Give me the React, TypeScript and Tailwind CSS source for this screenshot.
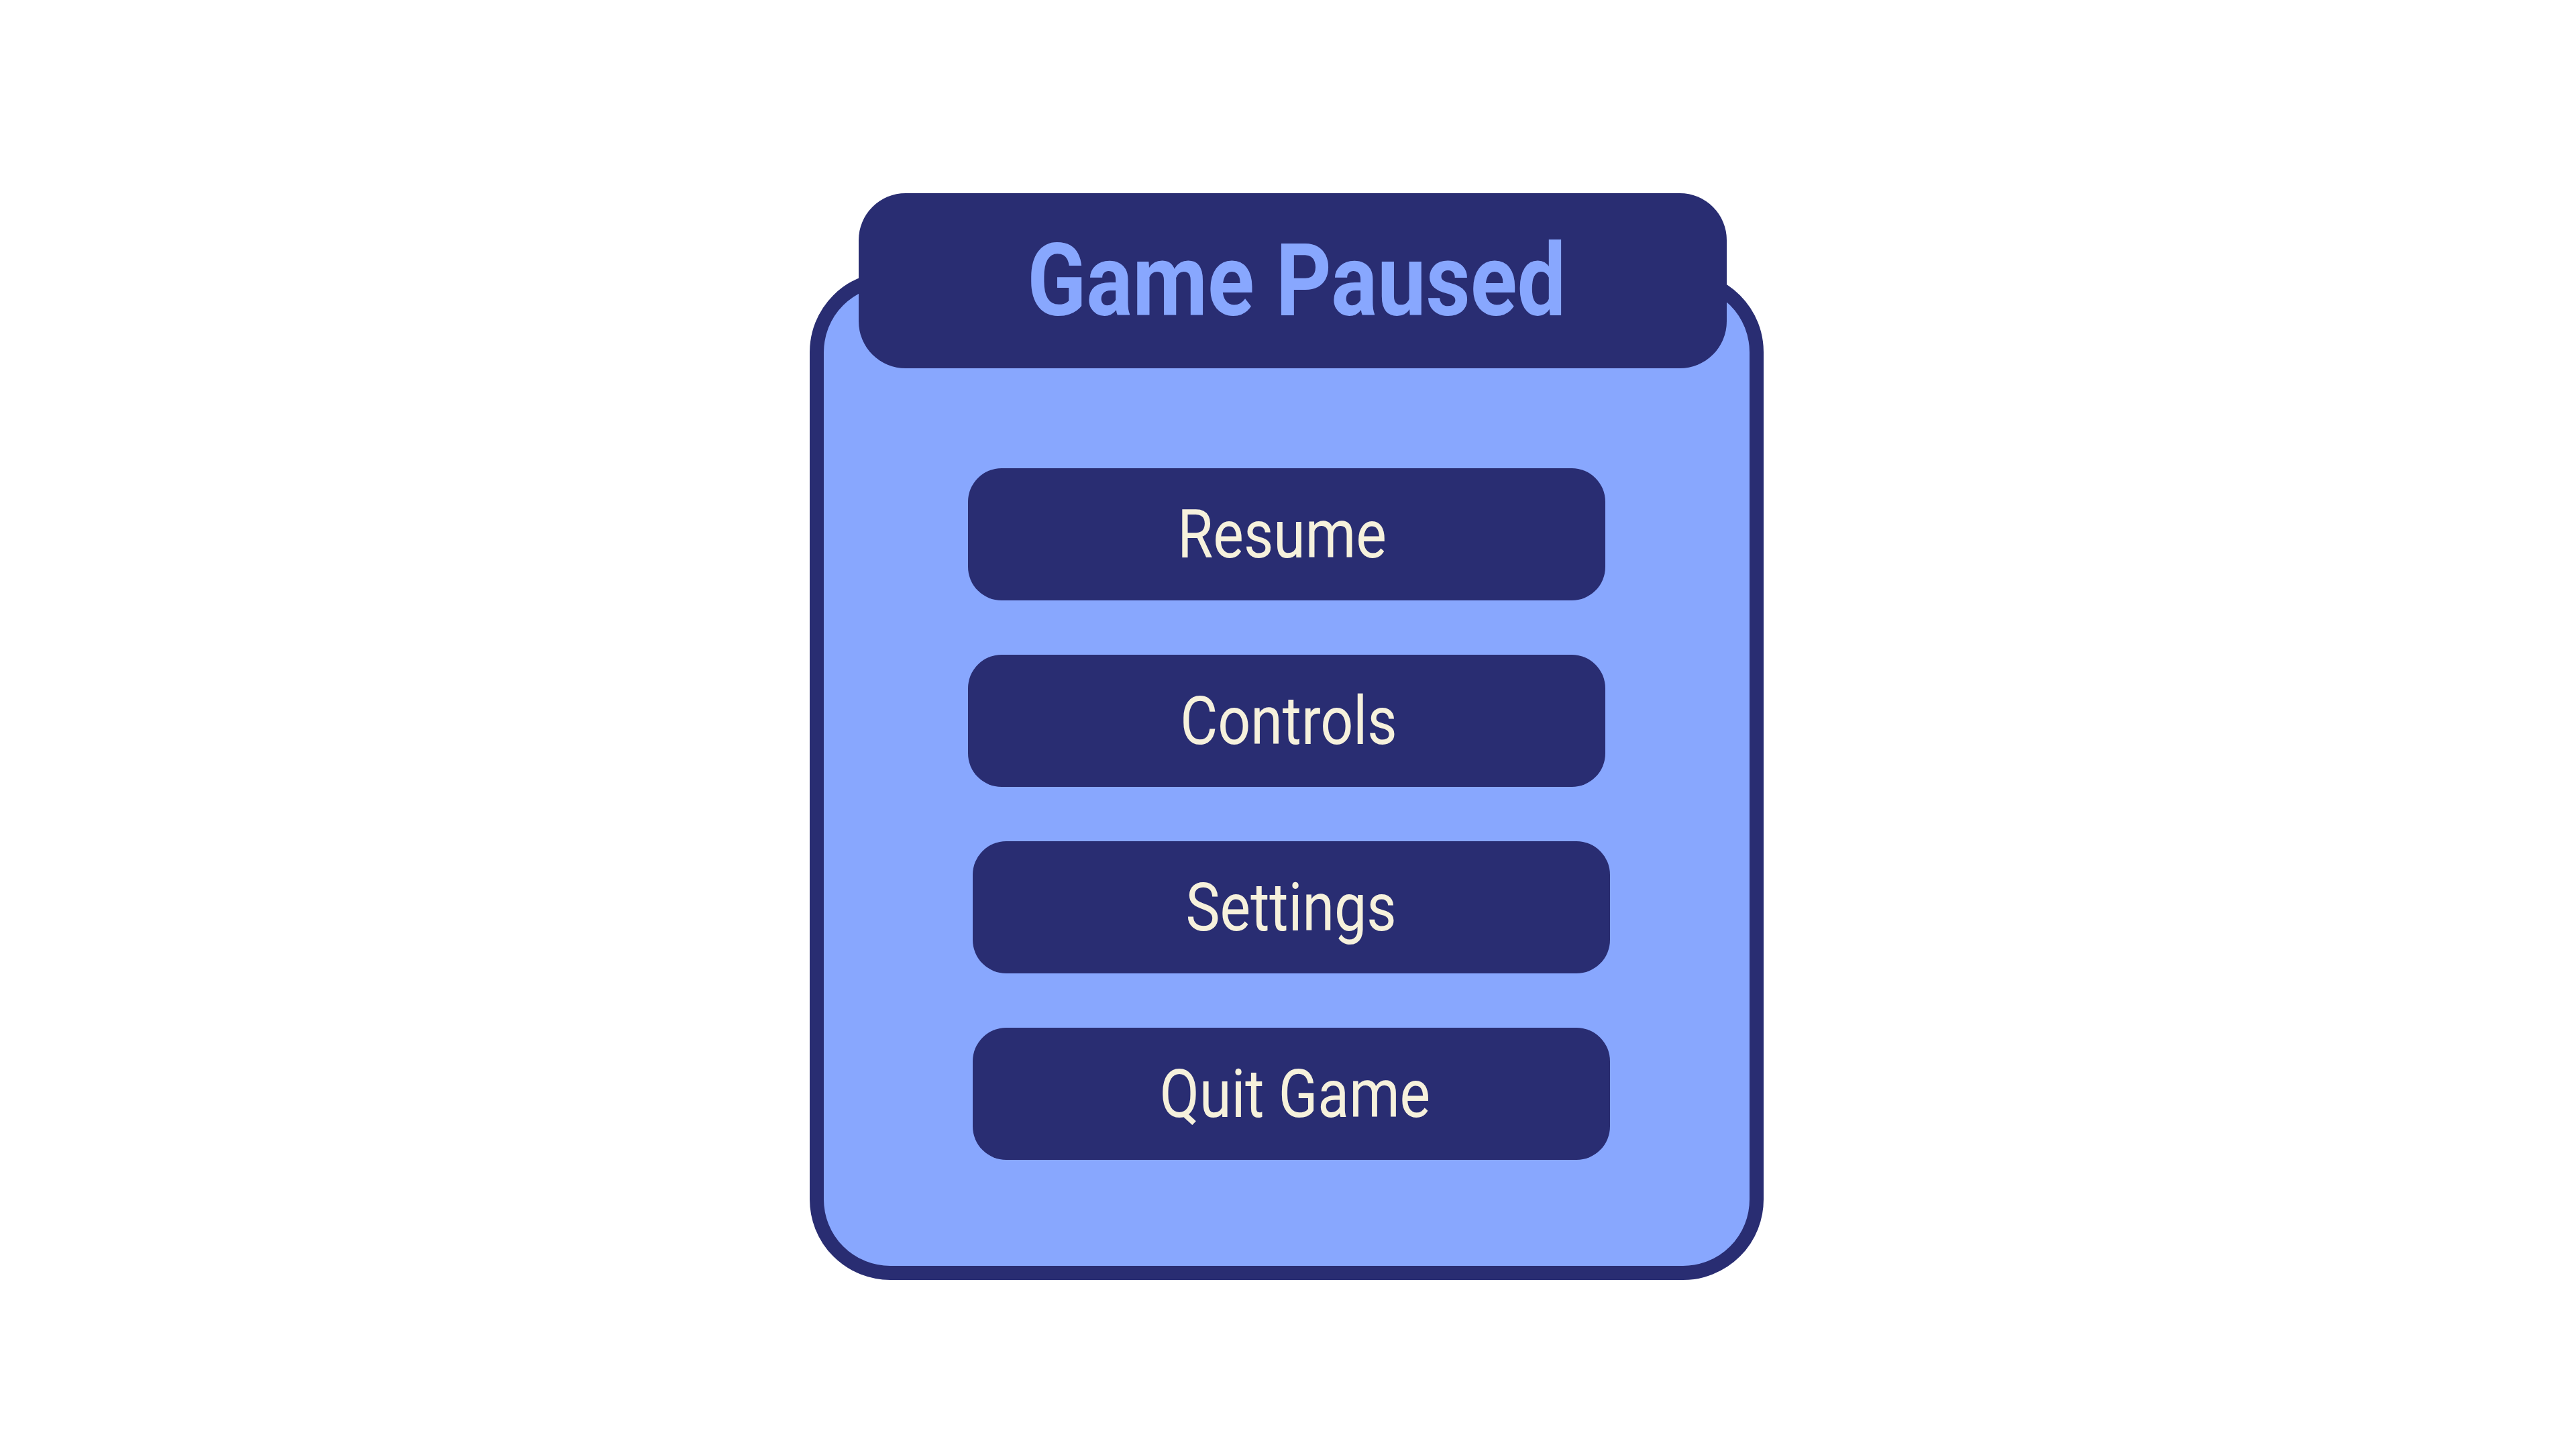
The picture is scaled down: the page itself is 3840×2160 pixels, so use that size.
const menuItems = [
  { label: "Resume", shift: "ml-0", nudge: "-ml-[14px]" },
  { label: "Controls", shift: "ml-0", nudge: "ml-[5px]" },
  { label: "Settings", shift: "ml-[14px]", nudge: "ml-0" },
  { label: "Quit Game", shift: "ml-[14px]", nudge: "ml-[11px]" },
];

export default function App() {
  return (
    <div className="min-h-screen w-full bg-white pt-[288px] font-['Roboto',sans-serif]">
      <div className="ml-[1207px] w-[1422px]">
        {/* title tab sits over the panel's top edge */}
        <div className="relative z-10 ml-[73px] flex h-[261px] w-[1294px] items-center justify-center rounded-[70px] bg-[#292d72]">
          <h1 className="ml-[12px] inline-block scale-x-[0.86] text-[150px] font-bold leading-none text-[#88a7fe]">
            Game Paused
          </h1>
        </div>

        <div className="-mt-[144px] flex h-[1503px] flex-col items-center gap-[81px] rounded-[120px] border-[21px] border-[#292d72] bg-[#88a7fe] pt-[272px]">
          {menuItems.map((item) => (
            <button
              key={item.label}
              className={`${item.shift} flex h-[197px] w-[950px] items-center justify-center rounded-[50px] bg-[#292d72]`}
            >
              <span className={`${item.nudge} inline-block scale-x-[0.86] text-[100px] leading-none text-[#f6f1dc]`}>
                {item.label}
              </span>
            </button>
          ))}
        </div>
      </div>
    </div>
  );
}
